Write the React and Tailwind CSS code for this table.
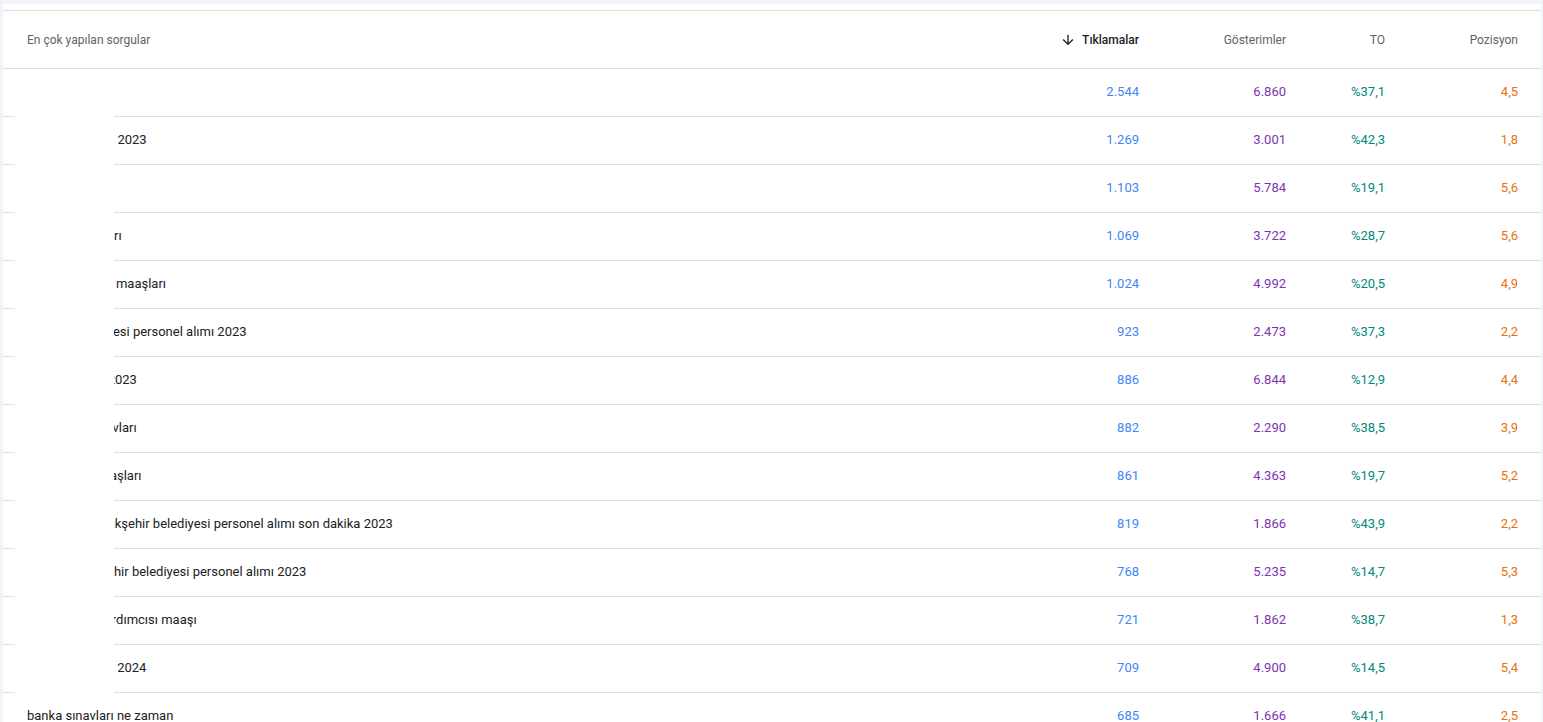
const rows = [
  { q: "kpss", c: "2.544", i: "6.860", ctr: "%37,1", p: "4,5" },
  { q: "memur alımları 2023", c: "1.269", i: "3.001", ctr: "%42,3", p: "1,8" },
  { q: "ösym", c: "1.103", i: "5.784", ctr: "%19,1", p: "5,6" },
  { q: "memur maaşları", c: "1.069", i: "3.722", ctr: "%28,7", p: "5,6" },
  { q: "sağlık memuru maaşları", c: "1.024", i: "4.992", ctr: "%20,5", p: "4,9" },
  { q: "antalya belediyesi personel alımı 2023", c: "923", i: "2.473", ctr: "%37,3", p: "2,2" },
  { q: "askeri zammı 2023", c: "886", i: "6.844", ctr: "%12,9", p: "4,4" },
  { q: "bankacılık sınavları", c: "882", i: "2.290", ctr: "%38,5", p: "3,9" },
  { q: "milletvekili maaşları", c: "861", i: "4.363", ctr: "%19,7", p: "5,2" },
  { q: "gaziantep büyükşehir belediyesi personel alımı son dakika 2023", c: "819", i: "1.866", ctr: "%43,9", p: "2,2" },
  { q: "adana büyükşehir belediyesi personel alımı 2023", c: "768", i: "5.235", ctr: "%14,7", p: "5,3" },
  { q: "polis müdür yardımcısı maaşı", c: "721", i: "1.862", ctr: "%38,7", p: "1,3" },
  { q: "öğretmen alımı 2024", c: "709", i: "4.900", ctr: "%14,5", p: "5,4" },
  { q: "banka sınavları ne zaman", c: "685", i: "1.666", ctr: "%41,1", p: "2,5" },
];

function ArrowDown() {
  return (
    <svg width="16" height="16" viewBox="0 0 24 24" fill="#202124">
      <path d="M20 12l-1.41-1.41L13 16.17V4h-2v12.17l-5.58-5.59L4 12l8 8 8-8z" />
    </svg>
  );
}

export default function App() {
  return (
    <div className="h-[722px] overflow-hidden bg-[#f0f4fa] pt-[4px] pl-[3px] pr-[2px] font-['Roboto',sans-serif]">
      <div className="relative bg-white pt-[6px] h-full">
        {/* header */}
        <div className="flex items-center h-[59px] border-y border-[#e0e0e0] pl-[24px] pr-[23px] text-[12px] text-[#5f6368]">
          <div className="flex-1">En çok yapılan sorgular</div>
          <div className="w-[200px] flex items-center justify-end gap-[6px] text-[#202124] font-medium">
            <ArrowDown />
            <span>Tıklamalar</span>
          </div>
          <div className="w-[147px] text-right">Gösterimler</div>
          <div className="w-[99px] text-right">TO</div>
          <div className="w-[133px] text-right">Pozisyon</div>
        </div>

        {rows.map((r, idx) => (
          <div key={idx} className="flex items-center h-12 border-b border-[#e0e0e0] pl-[24px] pr-[23px] pb-[2px] text-[13px]">
            <div className="flex-1 text-[#202124] whitespace-nowrap">{r.q}</div>
            <div className="w-[200px] text-right text-[#4285f4]">{r.c}</div>
            <div className="w-[147px] text-right text-[#7b35b0]">{r.i}</div>
            <div className="w-[99px] text-right text-[#00897b]">{r.ctr}</div>
            <div className="w-[133px] text-right text-[#e8710a]">{r.p}</div>
          </div>
        ))}

        {/* white mask over the query column */}
        <div className="absolute left-[12px] top-[65px] w-[99px] h-[624px] bg-white" />
      </div>
    </div>
  );
}
